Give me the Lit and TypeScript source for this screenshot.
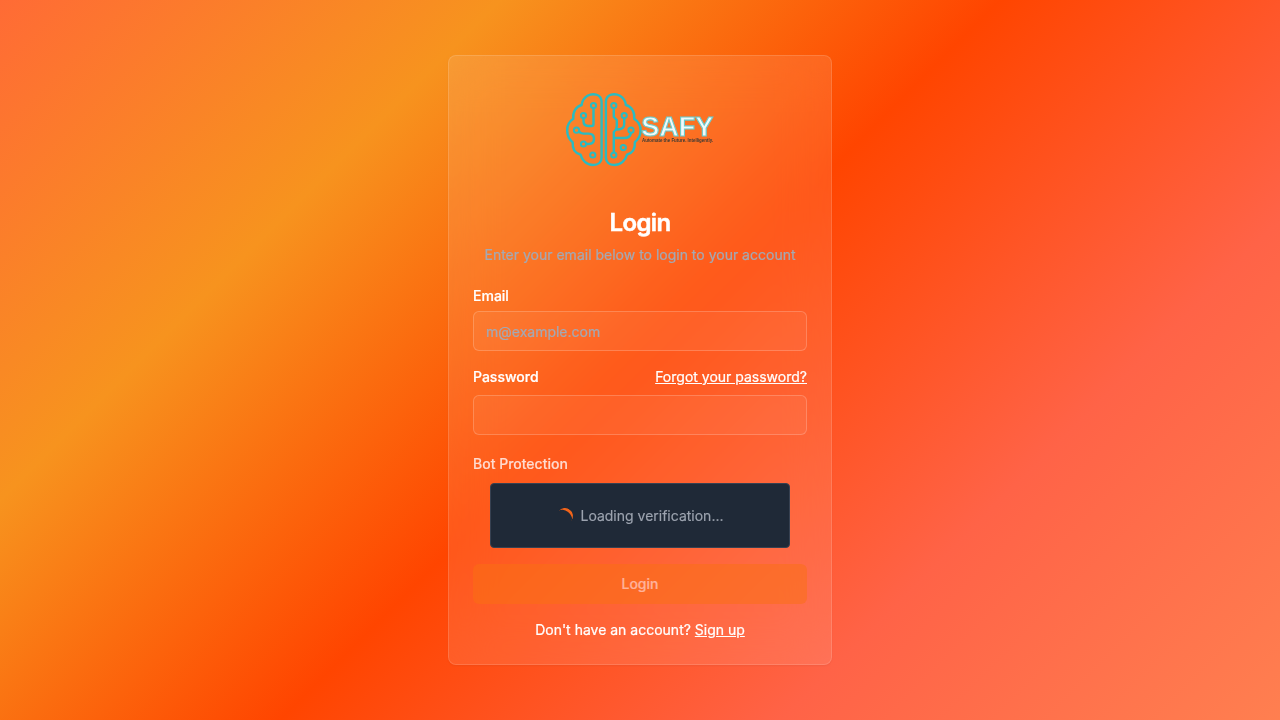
import { LitElement, html, css, svg } from "lit";
import { customElement } from "lit/decorators.js";

const NODES: [number, number][] = [
  [593.5, 105.5], [583.5, 115.5], [576.5, 130.2], [583.5, 144], [592.8, 155],
  [613.8, 105.5], [624.2, 115.5], [631, 130.2], [623.3, 147.6], [613.8, 155],
];

@customElement("safy-logo")
class SafyLogo extends LitElement {
  static styles = css`
    :host { display: block; width: 160px; height: 100px; -webkit-text-stroke: 0; }
    svg { display: block; overflow: visible; }
    .line { fill: none; stroke: #2bbbc1; stroke-width: 2.4; stroke-linecap: round; stroke-linejoin: round; }
    .node { fill: none; stroke: #2bbbc1; stroke-width: 2; }
    .name { font: 700 27px "Liberation Sans", sans-serif; fill: #f0fafa; stroke: #6bcaca; stroke-width: 1.1; }
    .tag { font: 700 5.6px "Liberation Sans", sans-serif; fill: #3b3a35; }
  `;
  render() {
    return html`<svg width="160" height="100" viewBox="560 80 160 100">
      <path class="line" d="M601.6 102C601.5 93 592 93.2 587.5 95.8C583.5 98.3 582 101.5 581.7 105C576 106.5 572.5 112 573.3 118.8C568.5 122 567 125.5 567.2 130.5C567.2 135.5 568.8 139 572.7 142.3C572.2 148.5 575 153 580.5 154.6C582 160.3 586.5 165 593 165C598.5 165 601.6 162 601.6 157.5Z" />
      <path class="line" d="M605.9 102C606 93 615.5 93.2 620 95.8C624 98.3 625.5 101.5 625.8 105C631.5 106.5 635 112 634.2 118.8C639 122 640.8 125.5 640.6 130.5C640.6 135.5 638.8 139 634.8 142.3C635.3 148.5 632.5 153 627 154.6C625.5 160.3 621 165 614.5 165C609 165 605.9 162 605.9 157.5Z" />
      <path class="line" d="M593.5 108.2V124Q593.5 126 591.5 126H588.5Q583.5 126 583.5 121V118.2M579.2 131.5Q580.5 133.6 583.5 133.6H588.5Q594 133.6 594 138.8T588.5 144H586.2" />
      <path class="line" d="M613.8 108.2V117L616.8 120V126.5Q616.8 129 613.8 132V152.3M624.2 118.2V124Q624.2 129.5 617 129.5M631 132.9Q630 138 624.5 138H614" />
      ${NODES.map(([x, y]) => svg`<circle class="node" cx=${x} cy=${y} r="2.6" />`)}
      <text class="name" x="641.3" y="135.6" textLength="72" lengthAdjust="spacingAndGlyphs">SAFY</text>
      <text class="tag" x="642" y="142.2" textLength="71" lengthAdjust="spacingAndGlyphs">Automate the Future. Intelligently.</text>
    </svg>`;
  }
}

@customElement("app-root")
class AppRoot extends LitElement {
  static styles = css`
    :host {
      display: flex; align-items: center; justify-content: center; height: 100vh;
      background: linear-gradient(135deg, #ff6b35 0%, #f7931e 25%, #ff4500 50%, #ff6347 75%, #ff7f50 100%);
      font: 14px/20px Inter, sans-serif; color: #fff;
      -webkit-text-stroke: 0.22px currentColor;
    }
    * { box-sizing: border-box; }
    .card {
      width: 384px; padding: 24px; border: 1px solid rgba(255, 255, 255, 0.14); border-radius: 8px;
      background: rgba(255, 255, 255, 0.1); backdrop-filter: blur(24px);
      box-shadow: 0 1px 2px rgba(0, 0, 0, 0.05);
    }
    .header { display: flex; flex-direction: column; align-items: center; gap: 6px; padding-bottom: 24px; }
    .logo { height: 121px; }
    h1 { margin: 0; font-size: 24px; line-height: 32px; font-weight: 600; letter-spacing: -0.6px; -webkit-text-stroke-width: 0.5px; }
    .desc { margin: 0; color: #a3a9b4; }
    .form { display: grid; gap: 16px; }
    .field { display: grid; gap: 8px; }
    .label { font-weight: 500; line-height: 14px; }
    .row { display: flex; align-items: center; justify-content: space-between; }
    .bot-label { font-weight: 500; line-height: 24px; padding-top: 1px; margin-bottom: -1px; color: #ffdbcf; -webkit-text-stroke: 0.15px #ffdbcf; }
    a { color: inherit; text-decoration: underline; }
    input {
      width: 100%; height: 40px; padding: 8px 12px; border: 1px solid rgba(255, 255, 255, 0.2);
      border-radius: 6px; background: rgba(255, 255, 255, 0.05); font: inherit; color: inherit; outline: none;
    }
    input::placeholder { color: #a3a9b4; opacity: 1; -webkit-text-stroke: 0.22px #a3a9b4; }
    .desc { -webkit-text-stroke: 0.22px #a3a9b4; }
    .verify {
      display: flex; align-items: center; justify-content: center; gap: 8px; justify-self: center;
      width: 300px; height: 65px; border: 1px solid #374151; border-radius: 4px; background: #1f2937; color: #9ca3af;
      -webkit-text-stroke: 0.15px #9ca3af;
    }
    .spinner { width: 16px; height: 16px; border-radius: 50%; border: 0 solid transparent; border-top: 3px solid #f2641a; transform: translateX(1px) rotate(38deg); }
    button {
      height: 40px; border: 0; border-radius: 6px; background: #f97012; color: #fff;
      font: 500 14px/20px Inter, sans-serif; opacity: 0.5; -webkit-text-stroke: 0.15px #fff;
    }
    .signup { text-align: center; }
  `;
  render() {
    return html`<main class="card">
      <header class="header">
        <div class="logo"><safy-logo></safy-logo></div>
        <h1>Login</h1>
        <p class="desc">Enter your email below to login to your account</p>
      </header>
      <div class="form">
        <div class="field">
          <label class="label" for="email">Email</label>
          <input id="email" type="email" placeholder="m@example.com" />
        </div>
        <div class="field">
          <div class="row">
            <label class="label" for="password">Password</label>
            <a>Forgot your password?</a>
          </div>
          <input id="password" type="password" />
        </div>
        <div class="field">
          <span class="bot-label">Bot Protection</span>
          <div class="verify"><span class="spinner"></span><span>Loading verification...</span></div>
        </div>
        <button disabled>Login</button>
        <div class="signup">Don't have an account? <a>Sign up</a></div>
      </div>
    </main>`;
  }
}
